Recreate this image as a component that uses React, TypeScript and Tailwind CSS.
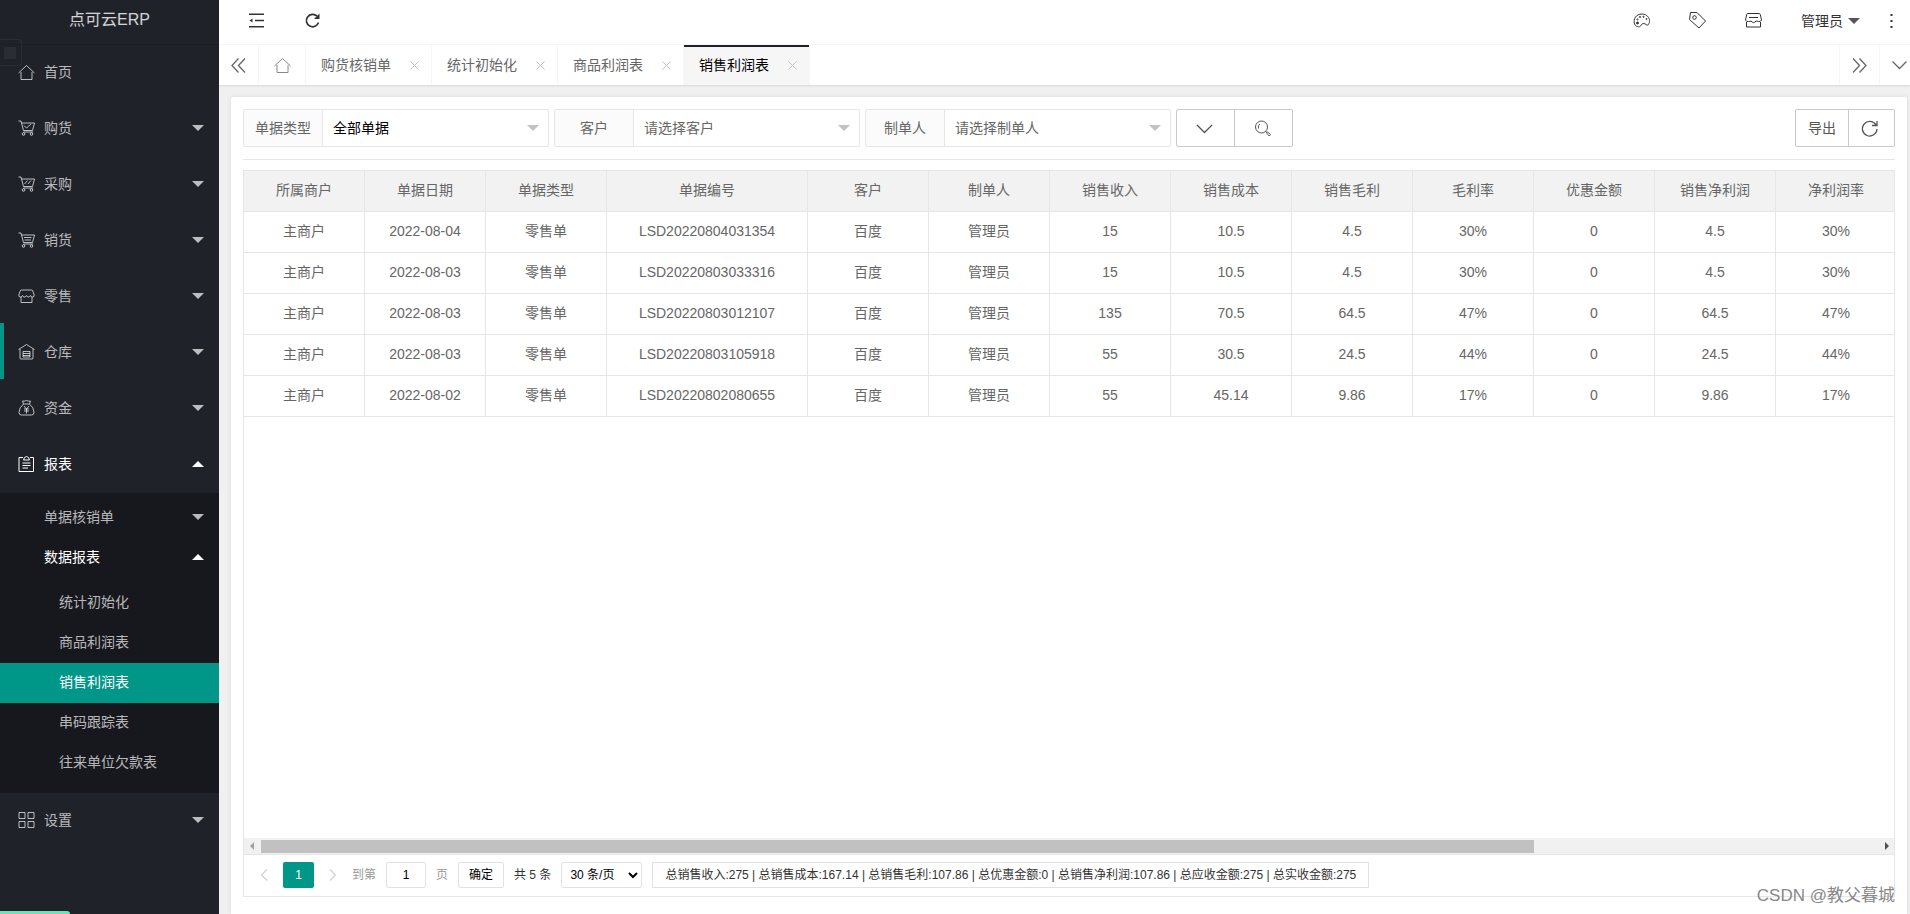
import { useState } from "react";
import type { ReactNode } from "react";

const cart = (
  <>
    <path d="M.5 1h2.500l2.500 9.500h9L16.500 3H3.500M5.500 12h9.500" />
    <circle cx="5.500" cy="14" r="1.300" />
    <circle cx="13.500" cy="14" r="1.300" />
  </>
);

const menuIcons: Record<string, ReactNode> = {
  home: <path d="M.5 9 8.500 1.500l8 7.500M3 8v7.500h11V8" />,
  cartCheck: (
    <>
      {cart}
      <path d="m6 5.500 2.500 2.500 4.500-4" />
    </>
  ),
  cartSlash: (
    <>
      {cart}
      <path d="m6.500 8 3-3.500M10 8l3-3.500" />
    </>
  ),
  cartLines: (
    <>
      {cart}
      <path d="M6 5.500h7.500M6.500 8h6.500" />
    </>
  ),
  shop: (
    <>
      <path d="M3.500 2h10q1 0 1.300 1l1.400 4q.3 2-1.700 2-1.500 0-2-1.500-.5 1.500-2 1.500t-2-1.500q-.5 1.500-2 1.500t-2-1.500Q4 9 2.500 9 .5 9 .8 7l1.400-4q.3-1 1.300-1Z" />
      <path d="M3 9v5.500h11V9" />
    </>
  ),
  warehouse: (
    <>
      <path d="M.5 5.500 8.500.5l8 5M2 5v9q0 1 1 1h11q1 0 1-1V5" />
      <path d="M5 7.500h7M5 9.500h7M5 11.500h7M5 13h7M5 7.500V13M12 7.500V13" />
    </>
  ),
  money: (
    <>
      <path d="M5.500 4 4.500 1q2 .5 4-.5 2 1 4 .5l-1 3ZM5.500 4Q1 7.500 1 12.500 1 15 3.500 15h10q2.500 0 2.500-2.500 0-5-4.500-8.500" />
      <path d="m6 6 2.500 3L11 6M8.500 9v4.500M6 9h5M6 11h5" />
    </>
  ),
  report: (
    <>
      <path d="M5 1.500H1v14h14.500v-14H12" />
      <path d="M5.500 4h6l-1-2.500-2-1-2 1ZM4.500 7h8M4.500 9.500h8M4.500 12h5.500" />
    </>
  ),
  grid: <path d="M1 .5h6v6H1ZM10 .5h6v6h-6ZM1 9.500h6v6H1ZM10 9.500h6v6h-6Z" />,
};

const topMenu = [
  { icon: "home", label: "首页", leaf: true },
  { icon: "cartCheck", label: "购货" },
  { icon: "cartSlash", label: "采购" },
  { icon: "cartLines", label: "销货" },
  { icon: "shop", label: "零售" },
  { icon: "warehouse", label: "仓库" },
  { icon: "money", label: "资金" },
  { icon: "report", label: "报表", open: true },
];

const reports = ["统计初始化", "商品利润表", "销售利润表", "串码跟踪表", "往来单位欠款表"];

const tabs = ["购货核销单", "统计初始化", "商品利润表", "销售利润表"];

const columns = [
  "所属商户",
  "单据日期",
  "单据类型",
  "单据编号",
  "客户",
  "制单人",
  "销售收入",
  "销售成本",
  "销售毛利",
  "毛利率",
  "优惠金额",
  "销售净利润",
  "净利润率",
];

const rows = [
  ["主商户", "2022-08-04", "零售单", "LSD20220804031354", "百度", "管理员", "15", "10.5", "4.5", "30%", "0", "4.5", "30%"],
  ["主商户", "2022-08-03", "零售单", "LSD20220803033316", "百度", "管理员", "15", "10.5", "4.5", "30%", "0", "4.5", "30%"],
  ["主商户", "2022-08-03", "零售单", "LSD20220803012107", "百度", "管理员", "135", "70.5", "64.5", "47%", "0", "64.5", "47%"],
  ["主商户", "2022-08-03", "零售单", "LSD20220803105918", "百度", "管理员", "55", "30.5", "24.5", "44%", "0", "24.5", "44%"],
  ["主商户", "2022-08-02", "零售单", "LSD20220802080655", "百度", "管理员", "55", "45.14", "9.86", "17%", "0", "9.86", "17%"],
];

function Caret({ up = false, className = "" }: { up?: boolean; className?: string }) {
  return (
    <svg width="12" height="6" viewBox="0 0 12 6" className={className} aria-hidden="true">
      <path d={up ? "M0 6 6 0l6 6Z" : "M0 0h12L6 6Z"} fill="currentColor" />
    </svg>
  );
}

function Stroke({ size = 17, width = 1, children }: { size?: number; width?: number; children: ReactNode }) {
  return (
    <svg
      width={size}
      height={size}
      viewBox={`0 0 ${size} ${size}`}
      fill="none"
      stroke="currentColor"
      strokeWidth={width}
      className="shrink-0"
      aria-hidden="true"
    >
      {children}
    </svg>
  );
}

function MenuItem({ icon, label, open, leaf }: { icon: string; label: string; open?: boolean; leaf?: boolean }) {
  return (
    <a
      href="#"
      className={`relative flex h-14 items-center pb-0.5 pl-[18px] pr-[15px] ${open ? "text-white" : "text-white/70"}`}
    >
      {label === "仓库" && <span className="absolute -top-0.5 left-0 h-14 w-1 bg-[#009688]" />}
      <Stroke>{menuIcons[icon]}</Stroke>
      <span className="ml-[9px] flex-1">{label}</span>
      {!leaf && <Caret up={open} />}
    </a>
  );
}

function Sidebar() {
  return (
    <aside className="relative w-[219px] shrink-0 bg-[#20222a] text-sm">
      <div className="flex h-[45px] justify-center border-b border-black/10 text-base leading-10 text-white/80">
        点可云ERP
      </div>
      <div className="absolute left-0 top-[39px] flex h-[27px] w-[22px] items-center rounded-r border border-l-0 border-white/5 pl-1">
        <span className="h-3 w-3 bg-white/5" />
      </div>
      <nav>
        {topMenu.map((item) => (
          <MenuItem key={item.label} {...item} />
        ))}
        <div className="bg-[#17181d] py-[5px]">
          <a href="#" className="flex h-10 items-center justify-between pb-0.5 pl-11 pr-[15px] text-white/70">
            单据核销单
            <Caret />
          </a>
          <a href="#" className="flex h-10 items-center justify-between pb-0.5 pl-11 pr-[15px] text-white">
            数据报表
            <Caret up />
          </a>
          <div className="py-[5px]">
            {reports.map((name) => (
              <a
                key={name}
                href="#"
                className={`flex h-10 items-center pb-0.5 pl-[59px] ${
                  name === "销售利润表" ? "bg-[#009688] text-white" : "text-white/70"
                }`}
              >
                {name}
              </a>
            ))}
          </div>
        </div>
        <MenuItem icon="grid" label="设置" />
      </nav>
      <div className="absolute bottom-0 left-0 h-[3px] w-[70px] rounded-tr bg-[#6fe0b8]" />
    </aside>
  );
}

function TopBar() {
  return (
    <header className="flex h-[45px] items-center border-b border-[#f6f6f6] bg-white pb-[3px] text-[#333]">
      <button aria-label="收起菜单" className="ml-[29px]">
        <Stroke width={1.500}>
          <path d="M1 2.200h15M7 8.500h9M1 14.800h15" />
          <path d="m1.500 8.500 3-2v4Z" fill="currentColor" stroke="none" />
        </Stroke>
      </button>
      <button aria-label="刷新" className="ml-[39px]">
        <Stroke width={1.700}>
          <path d="M13 4.200A6.200 6.200 0 1 0 14.500 10.500" />
          <path d="M15.500 1.500V7H10Z" fill="currentColor" stroke="none" />
        </Stroke>
      </button>
      <div className="ml-auto flex items-center">
        <button aria-label="主题" className="mr-[39px]">
          <Stroke>
            <path d="M13 12.500c-3-2.500-5 .5-5.500 1.500-1 1.500-4.500 1-6-2C0 7 3 2 9 2c5 0 7.500 4 7.500 6.500 0 2.500-1 6-3.500 4Z" />
            <circle cx="4.500" cy="11" r="1" fill="currentColor" />
            <circle cx="4.500" cy="7.500" r=".6" />
            <circle cx="7" cy="5" r=".6" />
            <circle cx="10.500" cy="4.800" r=".6" />
            <circle cx="13.500" cy="7" r=".6" />
          </Stroke>
        </button>
        <button aria-label="便签" className="mr-[39px]">
          <Stroke>
            <path d="M1.500.5H8l8.500 8.500-6.500 7L.5 7.500Z" />
            <circle cx="5.500" cy="5.500" r="1.800" />
          </Stroke>
        </button>
        <button aria-label="店铺" className="mr-[39px]">
          <Stroke>
            <path d="M3 1.500h11q1 0 1.300 1L16.500 8q-1 2-3 1.500-1.500-.5-2.500-.5-1 1.500-2.500 1.500T6 9q-1 .5-2.500.5Q1.500 10 .5 8l1.200-5.500q.3-1 1.300-1ZM1.500 10v5h14v-5" />
            <path d="M4 5.500h9" />
          </Stroke>
        </button>
        <button className="flex items-center text-sm">
          管理员
          <Caret className="ml-[5px] text-[#555]" />
        </button>
        <button aria-label="更多" className="ml-[23px] mr-[10px]">
          <svg width="17" height="17" viewBox="0 0 17 17" fill="#333" aria-hidden="true">
            <path d="M7.500 2h2v2h-2ZM7.500 8h2v2h-2ZM7.500 14h2v2h-2Z" />
          </svg>
        </button>
      </div>
    </header>
  );
}

function TabBar() {
  return (
    <div className="relative flex h-10 items-stretch bg-white text-sm text-[#666] shadow-[0_1px_2px_rgba(0,0,0,0.1)]">
      <button aria-label="向左" className="flex w-10 items-center justify-center border-r border-[#f6f6f6]">
        <Stroke width={1.300}>
          <path d="M8.500 1.500 2 8.500l6.500 7M15 1.500l-6.500 7 6.500 7" />
        </Stroke>
      </button>
      <a href="#" aria-label="首页" className="flex w-[47px] items-center justify-center border-r border-[#f6f6f6] text-[#888]">
        <Stroke>{menuIcons.home}</Stroke>
      </a>
      {tabs.map((tab) => {
        const active = tab === "销售利润表";
        return (
          <div
            key={tab}
            className={`flex w-[126px] items-center border-r border-[#f6f6f6] pl-[15px] ${
              active ? "bg-[#f6f6f6] text-black shadow-[inset_0_2px_0_#20222a]" : ""
            }`}
          >
            <a href="#">{tab}</a>
            <button aria-label={`关闭${tab}`} className="ml-[19px] text-[#c2c2c2]">
              <Stroke size={9}>
                <path d="m.5.5 8 8M8.500.5l-8 8" />
              </Stroke>
            </button>
          </div>
        );
      })}
      <button aria-label="向右" className="ml-auto flex w-[41px] items-center justify-center border-x border-[#f6f6f6]">
        <Stroke width={1.300}>
          <path d="m2 1.500 6.500 7-6.500 7M8.500 1.500l6.500 7-6.500 7" />
        </Stroke>
      </button>
      <button aria-label="标签操作" className="flex w-[30px] items-center justify-end pr-0.5">
        <Stroke width={1.300}>
          <path d="m1.500 4.500 7 7 7-7" />
        </Stroke>
      </button>
    </div>
  );
}

function FilterSelect({ id, label, value, filled }: { id: string; label: string; value: string; filled?: boolean }) {
  return (
    <div className="flex h-[38px] max-w-[306px] flex-1 rounded-xs border border-[#e6e6e6]">
      <label htmlFor={id} className="flex w-[79px] shrink-0 items-center justify-center border-r border-[#e6e6e6] bg-[#fbfbfb]">
        {label}
      </label>
      <div className="relative flex flex-1 items-center">
        <select
          id={id}
          className={`h-full w-full appearance-none bg-transparent pl-[10px] pr-8 outline-none ${filled ? "text-black" : "text-[#666]"}`}
        >
          <option>{value}</option>
        </select>
        <Caret className="pointer-events-none absolute right-[9px] text-[#c2c2c2]" />
      </div>
    </div>
  );
}

function FilterBar() {
  return (
    <div className="flex items-start justify-between border-b border-[#e6e6e6] pb-3">
      <form className="flex flex-1 gap-[5px]">
        <FilterSelect id="bill-type" label="单据类型" value="全部单据" filled />
        <FilterSelect id="customer" label="客户" value="请选择客户" />
        <FilterSelect id="maker" label="制单人" value="请选择制单人" />
        <div className="flex h-[38px] w-[117px] rounded-xs border border-[#c9c9c9] text-[#555]">
          <button type="button" aria-label="更多条件" className="flex flex-1 items-center justify-center border-r border-[#c9c9c9] pr-0.5">
            <Stroke width={1.300}>
              <path d="m1 5 7.500 7.500L16 5" />
            </Stroke>
          </button>
          <button type="button" aria-label="搜索" className="flex flex-1 items-center justify-center pr-0.5">
            <Stroke>
              <circle cx="7.500" cy="7" r="6" />
              <path d="M4.500 8.500Q3.500 5.500 6 4M11.500 11.500l1.500 1M12.500 13l1-1.200 3 2.700-1.200 1.500Z" />
            </Stroke>
          </button>
        </div>
      </form>
      <div className="flex h-[38px] rounded-xs border border-[#c9c9c9] text-[#555]">
        <button className="w-[53px] border-r border-[#c9c9c9]">导出</button>
        <button aria-label="重新加载" className="flex w-[45px] items-center justify-center pr-1">
          <Stroke width={1.300}>
            <path d="M15 5A7.300 7.300 0 1 0 16 9M16 1v4.500h-5" />
          </Stroke>
        </button>
      </div>
    </div>
  );
}

function ProfitTable() {
  return (
    <div className="flex-1 overflow-hidden">
      <table className="w-[1653px] table-fixed border-separate border-spacing-0 text-center">
        <colgroup>
          {columns.map((name) => (
            <col key={name} className={name === "单据编号" ? "w-[201px]" : "w-[121px]"} />
          ))}
        </colgroup>
        <thead>
          <tr className="h-[41px] bg-[#f2f2f2]">
            {columns.map((name) => (
              <th key={name} className="border-b border-r border-[#e6e6e6] pb-0.5 font-normal">
                {name}
              </th>
            ))}
          </tr>
        </thead>
        <tbody>
          {rows.map((row) => (
            <tr key={row[3]} className="h-[41px]">
              {row.map((cell, i) => (
                <td key={columns[i]} className="border-b border-r border-[#e6e6e6] pb-0.5">
                  {cell}
                </td>
              ))}
            </tr>
          ))}
        </tbody>
      </table>
    </div>
  );
}

function ScrollTrack() {
  return (
    <div className="flex h-4 items-center bg-[#f1f1f1]">
      <svg width="17" height="16" viewBox="0 0 17 16" className="shrink-0" aria-hidden="true">
        <path d="M10 4v8L6 8Z" fill="#a3a3a3" />
      </svg>
      <div className="h-[13px] flex-[26] bg-[#c1c1c1]" />
      <div className="flex-[7]" />
      <svg width="17" height="16" viewBox="0 0 17 16" className="shrink-0" aria-hidden="true">
        <path d="M8 4v8l4-4Z" fill="#505050" />
      </svg>
    </div>
  );
}

function Pager() {
  const [page, setPage] = useState("1");

  return (
    <div className="flex h-[42px] items-center border-t border-[#e6e6e6] pb-0.5 pl-[14px] text-xs text-[#333]">
      <button aria-label="上一页" className="text-[#d2d2d2]">
        <Stroke size={12} width={1.300}>
          <path d="M9 .5 3.500 6 9 11.500" />
        </Stroke>
      </button>
      <button className="ml-[13px] h-[26px] w-[31px] rounded-xs bg-[#009688] text-white">1</button>
      <button aria-label="下一页" className="ml-[13px] text-[#d2d2d2]">
        <Stroke size={12} width={1.300}>
          <path d="M3 .5 8.500 6 3 11.500" />
        </Stroke>
      </button>
      <label htmlFor="page" className="ml-[13px] text-[#999]">
        到第
      </label>
      <input
        id="page"
        value={page}
        onChange={(e) => setPage(e.target.value)}
        className="mx-[10px] h-[26px] w-10 rounded-xs border border-[#e2e2e2] text-center text-black"
      />
      <span className="text-[#999]">页</span>
      <button className="ml-[10px] h-[26px] w-[46px] rounded-xs border border-[#e2e2e2] text-black">确定</button>
      <span className="ml-[10px]">共 5 条</span>
      <select aria-label="每页条数" className="ml-[10px] h-[26px] w-[81px] rounded-xs border border-[#e2e2e2] bg-white pl-1 text-black">
        <option>30 条/页</option>
      </select>
      <div className="ml-[10px] flex h-[26px] items-center whitespace-nowrap border border-[#e2e2e2] px-3">
        总销售收入:275 | 总销售成本:167.14 | 总销售毛利:107.86 | 总优惠金额:0 | 总销售净利润:107.86 | 总应收金额:275 | 总实收金额:275
      </div>
    </div>
  );
}

export default function App() {
  return (
    <div className="relative flex min-h-screen font-['Liberation_Sans','Noto_Sans_CJK_SC',sans-serif]">
      <Sidebar />
      <div className="flex min-w-0 flex-1 flex-col bg-[#f0f0f0]">
        <TopBar />
        <TabBar />
        <main className="ml-3 mr-[3px] mt-3 flex flex-1 flex-col rounded-t-xs bg-white px-3 pb-[17px] pt-3 text-sm text-[#666] shadow-[0_0_4px_rgba(0,0,0,0.1)]">
          <FilterBar />
          <section className="mt-[10px] flex flex-1 flex-col border border-[#e6e6e6]">
            <ProfitTable />
            <ScrollTrack />
            <Pager />
          </section>
        </main>
      </div>
      <div className="absolute bottom-1.5 right-[15px] text-[17px] leading-6 text-[#888]">CSDN @教父暮城</div>
    </div>
  );
}
